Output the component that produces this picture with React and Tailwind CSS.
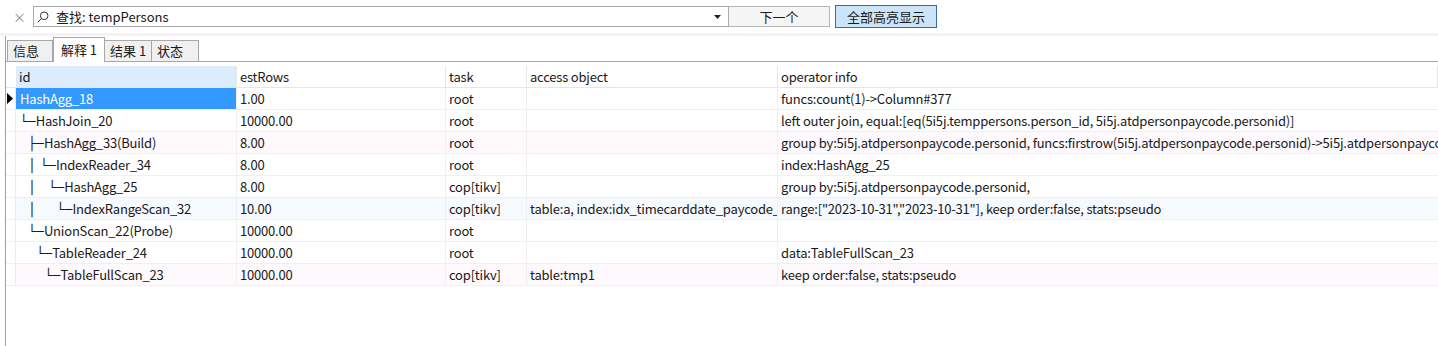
import { useState } from 'react'

const FONT = { fontFamily: '"Noto Sans CJK SC", "Noto Sans", sans-serif' }
const TREE = { fontFamily: '"DejaVu Sans", sans-serif', letterSpacing: 0 }

const COLUMNS = [
    { key: 'id', label: 'id', width: 'w-[221px]' },
    { key: 'estRows', label: 'estRows', width: 'w-[209px]' },
    { key: 'task', label: 'task', width: 'w-[81px]' },
    { key: 'access', label: 'access object', width: 'w-[251px]' },
    { key: 'info', label: 'operator info', width: 'flex-1' },
]

const ROWS = [
    { tree: '', name: 'HashAgg_18', estRows: '1.00', task: 'root', access: '', info: 'funcs:count(1)->Column#377', tint: '' },
    { tree: '└─', name: 'HashJoin_20', estRows: '10000.00', task: 'root', access: '', info: 'left outer join, equal:[eq(5i5j.temppersons.person_id, 5i5j.atdpersonpaycode.personid)]', tint: '' },
    { tree: '  ├─', name: 'HashAgg_33(Build)', estRows: '8.00', task: 'root', access: '', info: 'group by:5i5j.atdpersonpaycode.personid, funcs:firstrow(5i5j.atdpersonpaycode.personid)->5i5j.atdpersonpaycode.personid', tint: 'bg-[#fdf9fc]' },
    { tree: '  │ └─', name: 'IndexReader_34', estRows: '8.00', task: 'root', access: '', info: 'index:HashAgg_25', tint: '' },
    { tree: '  │   └─', name: 'HashAgg_25', estRows: '8.00', task: 'cop[tikv]', access: '', info: 'group by:5i5j.atdpersonpaycode.personid,', tint: '' },
    { tree: '  │     └─', name: 'IndexRangeScan_32', estRows: '10.00', task: 'cop[tikv]', access: 'table:a, index:idx_timecarddate_paycode_personid(timecarddate, paycode, personid)', info: 'range:["2023-10-31","2023-10-31"], keep order:false, stats:pseudo', tint: 'bg-[#f6f9fd]' },
    { tree: '  └─', name: 'UnionScan_22(Probe)', estRows: '10000.00', task: 'root', access: '', info: '', tint: '' },
    { tree: '    └─', name: 'TableReader_24', estRows: '10000.00', task: 'root', access: '', info: 'data:TableFullScan_23', tint: '' },
    { tree: '      └─', name: 'TableFullScan_23', estRows: '10000.00', task: 'cop[tikv]', access: 'table:tmp1', info: 'keep order:false, stats:pseudo', tint: 'bg-[#fdf9fc]' },
]

const TABS = ['信息', '解释 1', '结果 1', '状态']

function SearchIcon() {
    return (
        <svg width="12" height="12" viewBox="0 0 12 12" fill="none" stroke="#333" strokeWidth="1">
            <circle cx="7.2" cy="4.8" r="3.8" />
            <path d="M4.5 7.5 L0.8 11.2" />
        </svg>
    )
}

function FindBar() {
    return (
        <div className="flex h-[33px] items-center bg-white">
            <span className="w-[33px] pl-[13px] text-[13px] text-[#8c8c8c]">×</span>
            <div className="flex h-[21px] w-[696px] items-center border border-[#a9a9a9] bg-white">
                <span className="ml-[3px] mr-[7px]">
                    <SearchIcon />
                </span>
                <span className="flex-1 text-[13px] text-[#1a1a1a]">查找: tempPersons</span>
                <svg className="mr-[7px]" width="7" height="4" viewBox="0 0 7 4">
                    <path d="M0 0 H7 L3.5 4 Z" fill="#222" />
                </svg>
            </div>
            <button className="h-[21px] w-[101px] border border-l-0 border-[#b5b5b5] bg-[#f5f5f5] text-[13px] text-[#1a1a1a]">
                下一个
            </button>
            <button className="ml-[5px] h-[23px] w-[102px] border border-[#2f6ea6] bg-[#cce4f7] text-[13px] text-[#1a1a1a]">
                全部高亮显示
            </button>
        </div>
    )
}

function Tabs({ active, onSelect }) {
    return (
        <div className="flex h-[26px] items-end border-b border-[#a8a8a8] pl-[1px]">
            {TABS.map((tab, i) => {
                const isActive = i === active
                return (
                    <button
                        key={tab}
                        onClick={() => onSelect(i)}
                        className={
                            isActive
                                ? 'relative -mb-px h-[25px] w-[52px] shrink-0 whitespace-nowrap border border-b-0 border-[#a8a8a8] bg-white pb-[1px] text-[13px] text-[#1a1a1a]'
                                : 'h-[21px] shrink-0 whitespace-nowrap border border-b-0 border-[#a8a8a8] bg-[#f0f0f0] pl-[5px] text-left text-[13px] text-[#1a1a1a] ' +
                                  (i === 0 ? 'w-[46px]' : 'w-[47px] border-l-0')
                        }
                    >
                        {tab}
                    </button>
                )
            })}
        </div>
    )
}

function ResultGrid() {
    return (
        <div className="mt-[4px] tracking-[-0.2px]">
            <div className="flex h-[22px] border-b border-[#e6e6e6]">
                <div className="w-[10px] shrink-0" />
                {COLUMNS.map((col, i) => (
                    <div
                        key={col.key}
                        className={`${col.width} shrink-0 border-r border-[#e6e6e6] pl-[3px] text-[13px] leading-[21px] text-[#1a1a1a] ${
                            i === 0 ? 'bg-[#dcecfc]' : ''
                        }`}
                    >
                        {col.label}
                    </div>
                ))}
            </div>
            {ROWS.map((row, r) => (
                <div key={row.name} className={`flex h-[22px] border-b border-[#f0f0f0] ${row.tint}`}>
                    <div className="flex w-[10px] shrink-0 items-center border-r border-[#eaeaea] bg-white pl-[1px]">
                        {r === 0 && (
                            <svg width="6" height="11" viewBox="0 0 6 11">
                                <path d="M0 0 L6 5.5 L0 11 Z" fill="#000" />
                            </svg>
                        )}
                    </div>
                    <div
                        className={`w-[221px] shrink-0 overflow-hidden whitespace-pre border-r border-[#f0f0f0] pl-[4px] text-[13px] leading-[21px] ${
                            r === 0 ? 'bg-[#3399ff] text-white' : 'text-[#1a1a1a]'
                        }`}
                    >
                        <span style={TREE}>{row.tree}</span>
                        {row.name}
                    </div>
                    <div className="w-[209px] shrink-0 border-r border-[#f0f0f0] pl-[3px] text-[13px] leading-[21px] text-[#1a1a1a]">
                        {row.estRows}
                    </div>
                    <div className="w-[81px] shrink-0 border-r border-[#f0f0f0] pl-[3px] text-[13px] leading-[21px] text-[#1a1a1a]">
                        {row.task}
                    </div>
                    <div className="w-[251px] shrink-0 overflow-hidden whitespace-nowrap border-r border-[#f0f0f0] pl-[3px] text-[13px] leading-[21px] text-[#1a1a1a]">
                        {row.access}
                    </div>
                    <div className="flex-1 overflow-hidden whitespace-nowrap pl-[3px] text-[13px] leading-[21px] text-[#1a1a1a]">
                        {row.info}
                    </div>
                </div>
            ))}
        </div>
    )
}

export default function App() {
    const [active, setActive] = useState(1)

    return (
        <div className="h-[346px] w-[1438px] overflow-hidden bg-white" style={FONT}>
            <FindBar />
            <div className="h-[3px] bg-[#f6f1f4]" />
            <div className="ml-[5px] h-[310px] border-l border-[#a0a0a0]">
                <Tabs active={active} onSelect={setActive} />
                <ResultGrid />
            </div>
        </div>
    )
}
